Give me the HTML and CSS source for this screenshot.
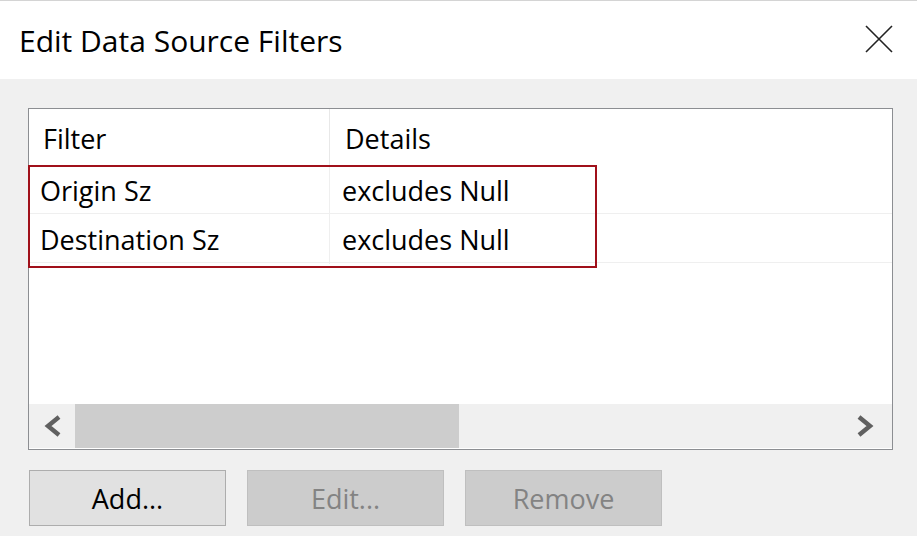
FILE: index.html
```html
<!DOCTYPE html>
<html>
<head>
<meta charset="utf-8">
<link rel="stylesheet" href="styles.css">
</head>
<body>
<div class="dialog">
  <div class="titlebar">
    <div class="title">Edit Data Source Filters</div>
    <svg class="close" width="28" height="28" viewBox="0 0 28 28"><path d="M1 1 L27 27 M27 1 L1 27" stroke="#222" stroke-width="1.6" fill="none"/></svg>
  </div>
  <div class="main">
    <div class="list">
      <div class="header">
        <div class="hcell first">Filter</div>
        <div class="hcell second">Details</div>
      </div>
      <div class="row">
        <div class="cell first">Origin Sz</div>
        <div class="cell second">excludes Null</div>
      </div>
      <div class="row">
        <div class="cell first">Destination Sz</div>
        <div class="cell second">excludes Null</div>
      </div>
      <div class="spacer"></div>
      <div class="scrollbar">
        <div class="arrow left"><svg width="18" height="22" viewBox="0 0 18 22"><polyline points="15,2 4,11 15,20" fill="none" stroke="#606060" stroke-width="4.4"/></svg></div>
        <div class="thumb"></div>
        <div class="track"></div>
        <div class="arrow right"><svg width="18" height="22" viewBox="0 0 18 22"><polyline points="3,2 14,11 3,20" fill="none" stroke="#606060" stroke-width="4.4"/></svg></div>
      </div>
      <div class="highlight"></div>
    </div>
    <div class="buttons">
      <button class="btn">Add...</button>
      <button class="btn disabled">Edit...</button>
      <button class="btn disabled">Remove</button>
    </div>
  </div>
</div>
</body>
</html>
```

FILE: styles.css
```css
html, body {
  margin: 0;
  padding: 0;
}
body {
  width: 917px;
  height: 536px;
  background: #f0f0f0;
  font-family: "Open Sans", "Noto Sans", sans-serif;
  color: #000;
  overflow: hidden;
}
.titlebar {
  height: 78px;
  border-top: 1px solid #d4d4d4;
  background: #fff;
  display: flex;
  align-items: center;
  justify-content: space-between;
  padding: 0 24px 0 19px;
}
.title {
  font-size: 30px;
  line-height: 40px;
  margin-top: 2px;
}
.close {
  display: block;
  margin-top: -3px;
}
.main {
  padding: 29px 24px 0 28px;
}
.list {
  position: relative;
  height: 342px;
  box-sizing: border-box;
  border: 1px solid #8c8e92;
  background: #fff;
  display: flex;
  flex-direction: column;
}
.header {
  height: 56px;
  display: grid;
  grid-template-columns: 301px 1fr;
}
.hcell {
  font-size: 27px;
  line-height: 56px;
  padding-top: 2px;
  box-sizing: border-box;
}
.hcell.first {
  padding-left: 14px;
  border-right: 1px solid #e8e8e8;
}
.hcell.second {
  padding-left: 15px;
}
.row {
  height: 48px;
  display: grid;
  grid-template-columns: 301px 1fr;
  border-bottom: 1px solid #efefef;
}
.cell {
  font-size: 27px;
  line-height: 48px;
  padding-top: 2px;
  box-sizing: border-box;
}
.cell.first {
  padding-left: 11px;
  border-right: 1px solid #efefef;
}
.cell.second {
  padding-left: 12px;
}
.spacer {
  flex: 1;
}
.scrollbar {
  height: 44px;
  display: flex;
  background: #f0f0f0;
  margin-bottom: 1px;
}
.arrow {
  width: 46px;
  display: flex;
  align-items: center;
  justify-content: center;
}
.arrow.left {
  padding-left: 2px;
  box-sizing: border-box;
}
.arrow.right {
  width: 47px;
  justify-content: flex-start;
  padding-left: 11px;
  box-sizing: border-box;
}
.thumb {
  width: 384px;
  background: #cdcdcd;
}
.track {
  flex: 1;
}
.highlight {
  position: absolute;
  left: -1px;
  top: 56px;
  width: 569px;
  height: 103px;
  box-sizing: border-box;
  border: 2px solid #a0101a;
  pointer-events: none;
}
.buttons {
  display: flex;
  gap: 21px;
  margin-top: 20px;
  padding-left: 1px;
}
.btn {
  width: 197px;
  height: 56px;
  box-sizing: border-box;
  border: 1px solid #adadad;
  background: #e1e1e1;
  font-family: "Open Sans", "Noto Sans", sans-serif;
  font-size: 27px;
  color: #000;
  padding: 0;
  margin: 0;
}
.btn.disabled {
  background: #cccccc;
  border-color: #bfbfbf;
  color: #838383;
}
```
